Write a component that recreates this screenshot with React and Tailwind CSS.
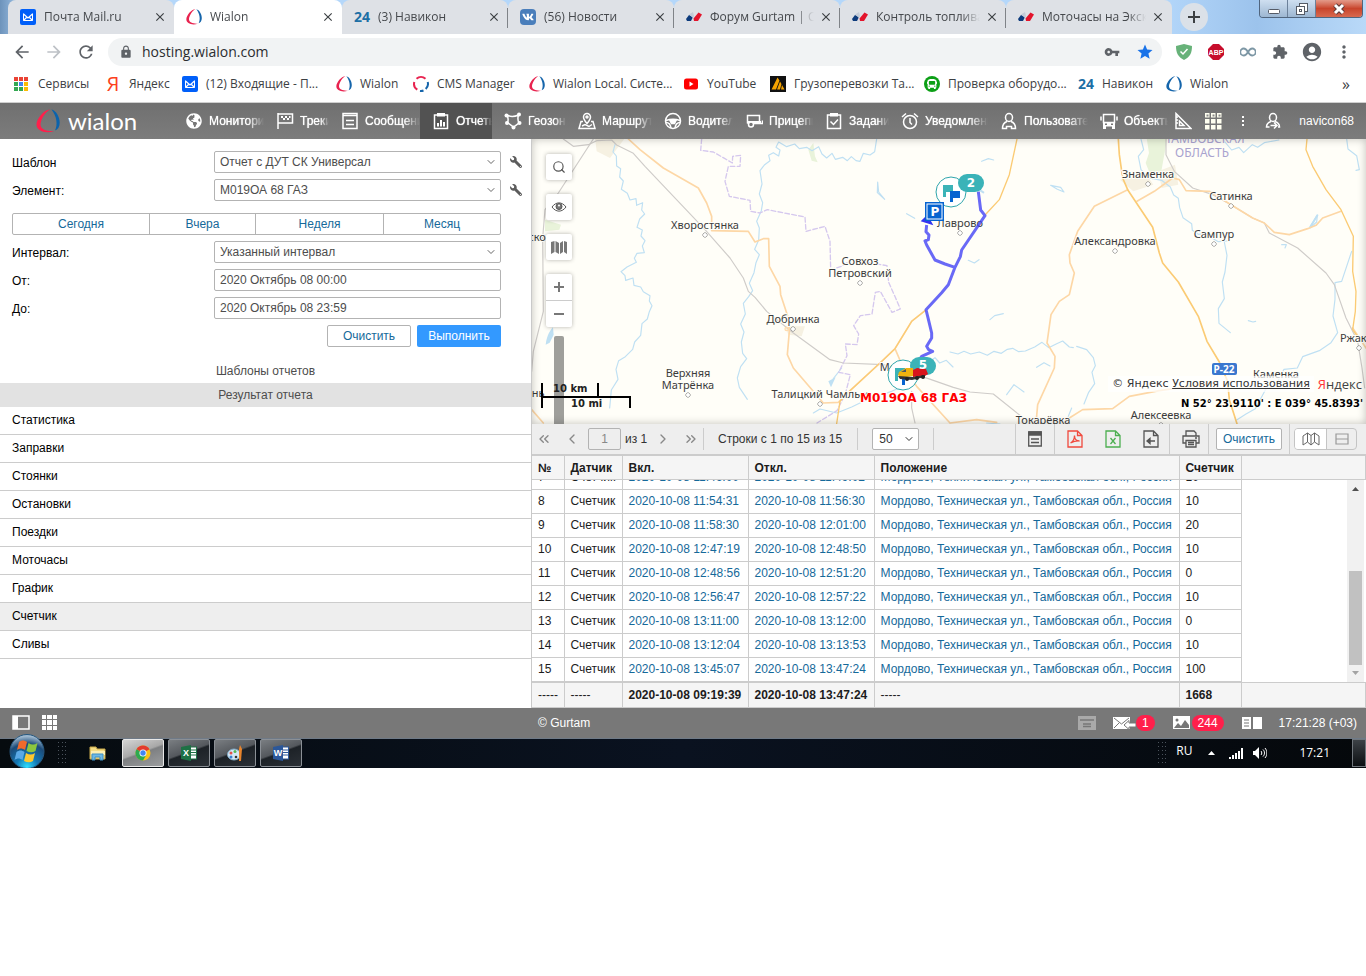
import React, { useState } from "react";
import {
  MdAccountCircle,
  MdArrowBack,
  MdArrowForward,
  MdClose,
  MdExtension,
  MdLock,
  MdMoreVert,
  MdRefresh,
  MdStar,
  MdVpnKey,
} from "react-icons/md";
import { FaBus, FaGlobeAmericas, FaVk, FaWrench } from "react-icons/fa";
import {
  ChevronDown,
  ChevronLeft,
  ChevronRight,
  ChevronsLeft,
  ChevronsRight,
  Search,
} from "lucide-react";

// ---------- small logos ----------

function Ring({ className, left = "#e8234f", right = "#1565ab" }) {
  return (
    <svg viewBox="0 0 24 24" className={className}>
      <path d="M14 .5C8 .5.5 10 .5 15.500c0 6.500 9 9.500 17.500 6.500-7 .5-13.500-1.500-13.500-6.500C4.500 11 9 3 14 .5z" fill={left} />
      <path d="M15.500.5c4.500 1 8.200 7.500 8.200 13 0 4-1.700 7-4.700 8 2.800-5.500 2-14-3.500-21z" fill={right} />
    </svg>
  );
}

function MailLogo() {
  return (
    <svg viewBox="0 0 16 16" className="w-4 h-4 shrink-0">
      <rect width="16" height="16" rx="2" fill="#005ff9" />
      <path d="M3.500 5l4.500 4 4.500-4M3.500 11.500l3-3M12.500 11.500l-3-3" fill="none" stroke="#fff" strokeWidth="1.300" />
      <path d="M3.500 4.500v7h9v-7" fill="none" stroke="#fff" />
    </svg>
  );
}

function GurtamLogo() {
  return (
    <svg viewBox="0 0 16 16" className="w-4 h-4 shrink-0">
      <path d="M0 10l3-4 4 2-2 4H1z" fill="#0d3b7c" />
      <path d="M3 5.500L7 3l1 4-1 2z" fill="#c3cbd8" />
      <path d="M7.500 9.500l5-6 3.500 2-4 6.500H8z" fill="#e3142c" />
    </svg>
  );
}

function Num24() {
  return (
    <span className="w-4 shrink-0 flex justify-center text-sm leading-4 font-bold text-[#1d6fa5]">
      24
    </span>
  );
}

function CmsLogo() {
  return (
    <svg viewBox="0 0 16 16" className="w-4 h-4 shrink-0" fill="none" strokeWidth="2">
      <path d="M3.500 2.700a7 7 0 0 1 9 0M1.300 6a7 7 0 0 0 3 7.700" stroke="#e8234f" />
      <path d="M14.700 6a7 7 0 0 1-2 7M10.500 14.500a7 7 0 0 1-3.500.4" stroke="#1565ab" />
    </svg>
  );
}

function AppsLogo() {
  const colors = ["#ea4335", "#ea4335", "#ea4335", "#34a853", "#4285f4", "#fbbc05", "#34a853", "#34a853", "#fbbc05"];
  return (
    <svg viewBox="0 0 14 14" className="w-[14px] h-[14px] mr-[2px] shrink-0">
      {colors.map((c, i) => (
        <rect key={i} x={(i % 3) * 5} y={Math.floor(i / 3) * 5} width="4" height="4" fill={c} />
      ))}
    </svg>
  );
}

// ---------- browser ----------

const TABS = [
  { icon: <MailLogo />, title: "Почта Mail.ru" },
  { icon: <Ring className="w-4 h-4 shrink-0" />, title: "Wialon", active: true },
  { icon: <Num24 />, title: "(3) Навикон" },
  {
    icon: (
      <span className="w-4 h-4 shrink-0 rounded-sm bg-[#4a7ebb] flex items-center justify-center text-white">
        <FaVk className="w-3 h-3" />
      </span>
    ),
    title: "(56) Новости",
  },
  { icon: <GurtamLogo />, title: "Форум Gurtam | Со" },
  { icon: <GurtamLogo />, title: "Контроль топлива" },
  { icon: <GurtamLogo />, title: "Моточасы на Экск" },
];

function TabStrip() {
  return (
    <div className="flex h-[34px] bg-[linear-gradient(90deg,#6d93bb_0,#b4d7fa_2%,#b4d7fa_85%,#9cc3ec_92%,#b9d9f8_100%)]">
      <div className="flex pl-2 min-w-0">
        {TABS.map((tab, i) => (
          <div
            key={i}
            className={`relative flex items-center pl-3 pr-[6px] rounded-t-lg ${
              tab.active ? "w-[168px] bg-white" : "w-[166px] bg-[#dee1e6]"
            }`}
          >
            {tab.icon}
            <span className="flex-1 min-w-0 ml-2 text-xs leading-4 text-[#45484c] whitespace-nowrap overflow-hidden [mask-image:linear-gradient(90deg,#000_82%,transparent)]">
              {tab.title}
            </span>
            <button type="button" aria-label="Закрыть" className="w-4 h-4 ml-1 flex items-center justify-center">
              <MdClose className="w-[14px] h-[14px] text-[#3c4043]" />
            </button>
            {i > 1 && i < 6 && (
              <span className="absolute right-0 top-2 w-px h-5 bg-[#7f8388]" />
            )}
          </div>
        ))}
      </div>
      <button
        type="button"
        className="w-7 h-7 ml-2 mt-[3px] rounded-full bg-[#dbe1e8] flex items-center justify-center shrink-0"
        aria-label="Новая вкладка"
      >
        <svg viewBox="0 0 12 12" className="w-3 h-3" stroke="#3c4043" strokeWidth="2">
          <path d="M6 0v12M0 6h12" />
        </svg>
      </button>
      <div className="flex ml-auto mr-[3px] h-[18px] rounded-b border border-t-0 border-[#50657e] overflow-hidden shrink-0">
        <button type="button" aria-label="Свернуть" className="w-7 flex items-center justify-center bg-linear-to-b from-[#cfdff0] to-[#9db7d2] border-r border-[#6c819a]">
          <svg viewBox="0 0 14 14" className="w-[14px] h-[14px]">
            <rect x="1.500" y="7.500" width="11" height="4" rx="1" fill="#fff" stroke="#555b66" />
          </svg>
        </button>
        <button type="button" aria-label="Развернуть" className="w-7 flex items-center justify-center bg-linear-to-b from-[#cfdff0] to-[#9db7d2] border-r border-[#6c819a]">
          <svg viewBox="0 0 14 14" className="w-[14px] h-[14px]" fill="#fff" stroke="#555b66">
            <rect x="4.500" y="1.500" width="8" height="8" />
            <rect x="1.500" y="4.500" width="8" height="8" />
            <rect x="4.500" y="7.500" width="2" height="2" />
          </svg>
        </button>
        <button type="button" aria-label="Закрыть окно" className="w-[46px] flex items-center justify-center bg-linear-to-b from-[#e39a8a] via-[#c8442c] to-[#d8694f]">
          <svg viewBox="0 0 14 12" className="w-[14px] h-3">
            <path d="M3 2l8 8M11 2l-8 8" stroke="#5b3a3a" strokeWidth="5" />
            <path d="M3 2l8 8M11 2l-8 8" stroke="#fff" strokeWidth="3" />
          </svg>
        </button>
      </div>
    </div>
  );
}

function AddressBar() {
  return (
    <div className="flex items-center h-9 pl-3 pr-[14px] text-[#5f6368]">
      <MdArrowBack className="w-5 h-5 shrink-0" />
      <MdArrowForward className="w-5 h-5 ml-3 shrink-0 text-[#bdc1c6]" />
      <MdRefresh className="w-5 h-5 ml-3 shrink-0" />
      <div className="flex flex-1 items-center h-7 ml-3 pl-[11px] pr-2 rounded-full bg-[#f1f3f4]">
        <MdLock className="w-[14px] h-[14px]" />
        <input
          aria-label="Адрес"
          className="flex-1 ml-2 pl-px text-sm outline-none text-[#2b2d30] bg-transparent"
          defaultValue="hosting.wialon.com"
        />
        <MdVpnKey className="w-4 h-4" />
        <MdStar className="w-[18px] h-[18px] ml-4 text-[#1a73e8]" />
      </div>
      <div className="flex items-center gap-4 ml-[14px] shrink-0">
        <svg viewBox="0 0 16 16" className="w-4 h-4">
          <path d="M0 2l8-2 8 2c0 7-2 11-8 14C2 13 0 9 0 2z" fill="#67b279" />
          <path d="M4.500 7.500l2.500 2.500 4.500-5" fill="none" stroke="#fff" strokeWidth="1.500" />
        </svg>
        <svg viewBox="0 0 16 16" className="w-4 h-4">
          <path d="M5 0h6l5 5v6l-5 5H5l-5-5V5z" fill="#c70d2c" />
          <text x="8" y="11" textAnchor="middle" fontSize="7" fontWeight="700" fill="#fff" fontFamily="Liberation Sans, sans-serif">
            ABP
          </text>
        </svg>
        <svg viewBox="0 0 16 16" className="w-4 h-4" fill="none" stroke="#7d97a5" strokeWidth="1.800">
          <path d="M8 8C6.500 5.500 5 4.500 3.800 4.500a3.500 3.500 0 0 0 0 7C5 11.500 6.500 10.500 8 8s3-3.500 4.200-3.500a3.500 3.500 0 0 1 0 7C11 11.500 9.500 10.500 8 8z" />
        </svg>
        <MdExtension className="w-4 h-4" />
        <MdAccountCircle className="w-[22px] h-[22px] -mx-[3px]" />
        <MdMoreVert className="w-5 h-5 -mx-[2px]" />
      </div>
    </div>
  );
}

const BOOKMARKS = [
  { w: "w-[91px]", icon: <AppsLogo />, label: "Сервисы" },
  { w: "w-[77px]", icon: <span className="w-4 shrink-0 text-center text-xl leading-5 text-[#fc3f1d]">Я</span>, label: "Яндекс" },
  { w: "w-[154px]", icon: <MailLogo />, label: "(12) Входящие - П..." },
  { w: "w-[77px]", icon: <Ring className="w-4 h-4 shrink-0" />, label: "Wialon" },
  { w: "w-[116px]", icon: <CmsLogo />, label: "CMS Manager" },
  { w: "w-[154px]", icon: <Ring className="w-4 h-4 shrink-0" />, label: "Wialon Local. Систе..." },
  {
    w: "w-[87px]",
    icon: (
      <svg viewBox="0 0 16 16" className="w-4 h-4 shrink-0">
        <rect x="1" y="2.500" width="14" height="11" rx="2.500" fill="#f00" />
        <path d="M6.500 5.500v5l4-2.500z" fill="#fff" />
      </svg>
    ),
    label: "YouTube",
  },
  {
    w: "w-[154px]",
    icon: (
      <svg viewBox="0 0 16 16" className="w-4 h-4 shrink-0">
        <rect width="16" height="16" fill="#111" />
        <path d="M1.500 13.500l6-12 2 3-3.500 9zM7 13.500l3-8 1.500 2.500-1.500 5.500zM11 13.500l1-4.500 2.500 4.500z" fill="#f5a300" />
      </svg>
    ),
    label: "Грузоперевозки Та...",
  },
  {
    w: "w-[154px]",
    icon: (
      <span className="w-4 h-4 shrink-0 rounded-full bg-[#0c9f16] flex items-center justify-center text-white">
        <FaBus className="w-[10px] h-[10px]" />
      </span>
    ),
    label: "Проверка оборудо...",
  },
  { w: "w-[88px]", icon: <Num24 />, label: "Навикон" },
  { w: "w-[77px]", icon: <Ring className="w-4 h-4 shrink-0" left="#1565ab" />, label: "Wialon" },
];

function Bookmarks() {
  return (
    <div className="flex items-center h-[33px] pl-[14px] pr-4 pb-1 border-b border-[#cfcfcf]">
      {BOOKMARKS.map((b, i) => (
        <a key={i} href="#" className={`${b.w} shrink-0 flex items-center text-xs leading-4 text-[#3c4043] whitespace-nowrap`}>
          {b.icon}
          <span className="ml-2">{b.label}</span>
        </a>
      ))}
      <span className="ml-auto text-base leading-4 text-[#3c4043]">»</span>
    </div>
  );
}

// ---------- wialon header ----------

function NavSvg({ children }) {
  return (
    <svg viewBox="0 0 18 18" className="w-[18px] h-[18px] shrink-0" fill="none" stroke="currentColor" strokeWidth="1.500">
      {children}
    </svg>
  );
}

const NAV = [
  { w: "w-[91px]", label: "Мониторинг", icon: <FaGlobeAmericas className="w-4 h-4 mx-px shrink-0" /> },
  {
    w: "w-[65px]",
    label: "Треки",
    icon: (
      <NavSvg>
        <path d="M2 1v16M2 2h14.500v9H2" />
        <path d="M5 4h2v2H5zM9 4h2v2H9zM13 4h1.500v2H13zM7 6h2v2H7zM11 6h2v2h-2z" fill="currentColor" stroke="none" />
      </NavSvg>
    ),
  },
  {
    w: "w-[91px]",
    label: "Сообщения",
    icon: (
      <NavSvg>
        <path d="M2 1.500h14v15H2zM2 3.500h14M5 8.500h8M5 12.500h8" />
      </NavSvg>
    ),
  },
  {
    w: "w-[72px]",
    label: "Отчеты",
    icon: (
      <NavSvg>
        <path d="M2.500 3h13v13.500h-13z" />
        <path d="M5 1h8v3.500H5zM5 11h2v3.500H5zM8 8h2v6.500H8zM11 10h2v4.500h-2z" fill="currentColor" stroke="none" />
      </NavSvg>
    ),
  },
  {
    w: "w-[74px]",
    label: "Геозоны",
    icon: (
      <NavSvg>
        <path d="M4 3.500c3 1.500 7 1 10.500-.5-1 3-1 5 .5 8l-5.500 4-6-4.500C4.500 8 4.500 6 3 3.500z" />
        <g fill="currentColor" stroke="none">
          <circle cx="2.500" cy="3.500" r="2" />
          <circle cx="15" cy="2.500" r="2" />
          <circle cx="15.500" cy="11" r="2" />
          <circle cx="9.500" cy="15.500" r="2" />
          <circle cx="3" cy="11" r="2" />
        </g>
      </NavSvg>
    ),
  },
  {
    w: "w-[86px]",
    label: "Маршруты",
    icon: (
      <NavSvg>
        <path d="M5 9.500H3L1 16.500h16l-2-7h-2M4 14l3-1.500 4 2 3-2" />
        <path d="M9 11.500C6.500 8.500 5.500 7 5.500 5a3.500 3.500 0 0 1 7 0c0 2-1 3.500-3.500 6.500z" />
        <circle cx="9" cy="5" r="1" />
      </NavSvg>
    ),
  },
  {
    w: "w-[81px]",
    label: "Водители",
    icon: (
      <NavSvg>
        <circle cx="9" cy="9" r="7.500" />
        <path d="M2 8.500c4-1.500 10-1.500 14 0M2 10.500c3 0 4.500 2 5 5.500M16 10.500c-3 0-4.500 2-5 5.500" />
        <path d="M6 8.500h6l-1.500 3h-3z" fill="currentColor" />
      </NavSvg>
    ),
  },
  {
    w: "w-[80px]",
    label: "Прицепы",
    icon: (
      <NavSvg>
        <path d="M2.500 11.500v-8h12v8H8.500M14.500 11.500h3v-3" />
        <path d="M2 9h12v2.500H2zM14 9h2v3h-2z" fill="currentColor" stroke="none" />
        <circle cx="6" cy="12.500" r="2.500" fill="#767676" />
      </NavSvg>
    ),
  },
  {
    w: "w-[76px]",
    label: "Задания",
    icon: (
      <NavSvg>
        <path d="M2.500 3h13v13.500h-13zM5.500 9.500l3 3 4.500-5" />
        <path d="M5 1h8v3.500H5z" fill="currentColor" stroke="none" />
      </NavSvg>
    ),
  },
  {
    w: "w-[99px]",
    label: "Уведомления",
    icon: (
      <NavSvg>
        <circle cx="9" cy="10" r="6.500" />
        <path d="M9 6v4.500l2 2M1 5l4-3.500M17 5l-4-3.500" />
      </NavSvg>
    ),
  },
  {
    w: "w-[100px]",
    label: "Пользователи",
    icon: (
      <NavSvg>
        <ellipse cx="9" cy="5.500" rx="3.500" ry="4" />
        <path d="M7 9.500c-3 1-4.500 2.500-4.500 7h4v-2h5v2h4c0-4.500-1.500-6-4.500-7" />
      </NavSvg>
    ),
  },
  {
    w: "w-[80px]",
    label: "Объекты",
    icon: (
      <NavSvg>
        <path d="M3.500 2.500h11v8h-11zM1 4.500v4M17 4.500v4" />
        <path d="M3 10h12v4.500H3zM3 14h3v3H3zM12 14h3v3h-3z" fill="currentColor" stroke="none" />
        <path d="M5 12.300h2M11 12.300h2" stroke="#777" />
      </NavSvg>
    ),
  },
];

function Header() {
  const [active, setActive] = useState(3);
  return (
    <header className="flex h-9 text-white text-xs leading-4 bg-linear-to-b from-[#707070] to-[#7c7c7c]">
      <a href="#" className="flex items-center w-[173px] pl-9 shrink-0">
        <Ring className="w-6 h-6" left="#ff1f4b" right="#0b63ad" />
        <span className="ml-2 font-['Lato'] text-2xl leading-8">wialon</span>
      </a>
      <nav className="flex">
        {NAV.map((item, i) => (
          <button
            key={item.label}
            type="button"
            onClick={() => setActive(i)}
            className={`${item.w} flex items-center pl-3 shrink-0 ${i === active ? "bg-[#525252]" : ""}`}
          >
            {item.icon}
            <span className="flex-1 min-w-0 ml-[6px] text-left whitespace-nowrap overflow-hidden [text-shadow:0_0_1px_#fff] [mask-image:linear-gradient(90deg,#000_70%,transparent)]">
              {item.label}
            </span>
          </button>
        ))}
      </nav>
      <div className="flex flex-1 items-center pr-3 [&>div]:w-[30px] [&>div]:flex [&>div]:justify-center">
        <div>
          <NavSvg>
            <path d="M2 1.500v15h15zM5.500 9v4.500H10z" />
            <path d="M2 5h2M2 8h2M2 11h2" />
          </NavSvg>
        </div>
        <div>
          <svg viewBox="0 0 17 17" className="w-[17px] h-[17px]">
            {[0, 1, 2, 3, 4, 5, 6, 7, 8].map((i) => (
              <rect key={i} x={(i % 3) * 6} y={Math.floor(i / 3) * 6} width="4.500" height="4.500" fill="#fffff0" />
            ))}
            <path d="M1.500 1.500h2v2h-2zM7.500 1.500h2v2h-2zM13.500 1.500h2v2h-2z" fill="#8a8a8a" />
          </svg>
        </div>
        <div>
          <svg viewBox="0 0 3 11" className="w-[3px] h-[11px]" fill="#fff">
            <path d="M0 0h2v2H0zM0 4h2v2H0zM0 8h2v2H0z" />
          </svg>
        </div>
        <div>
          <NavSvg>
            <ellipse cx="9" cy="5.500" rx="3.500" ry="4" />
            <path d="M7 9.500c-3 1-4.500 2.500-4.500 5.500h3M11 9.500c3 1 4.500 2.500 4.500 5.500h-1.500M6.500 13.500h6M10 10.500l3 3-3 3" />
          </NavSvg>
        </div>
        <span className="ml-auto">navicon68</span>
      </div>
    </header>
  );
}

// ---------- left panel ----------

function Picker({ id, value }) {
  return (
    <div className="relative flex-1">
      <select
        id={id}
        className="block appearance-none w-full h-[22px] pl-[5px] pr-5 rounded-xs border border-[#b3b3b3] bg-white text-[#4d4d4d]"
      >
        <option>{value}</option>
      </select>
      <ChevronDown className="absolute right-1 top-[5px] w-3 h-3 text-[#666] pointer-events-none" />
    </div>
  );
}

function Field({ label, id, tool, children }) {
  return (
    <div className="flex items-center h-[22px]">
      <label htmlFor={id} className="w-[202px] pt-[2px] shrink-0 text-black">
        {label}
      </label>
      {children}
      <div className="w-[30px] shrink-0 flex pl-[9px]">
        {tool && (
          <button type="button" aria-label="Настроить">
            <FaWrench className="w-3 h-3 -scale-x-100 text-[#5c5c5c]" />
          </button>
        )}
      </div>
    </div>
  );
}

const SECTIONS = ["Статистика", "Заправки", "Стоянки", "Остановки", "Поездки", "Моточасы", "График", "Счетчик", "Сливы"];
const inputClass = "flex-1 min-w-0 h-[22px] pl-[5px] rounded-xs border border-[#b3b3b3] text-[#4d4d4d]";

function ReportPanel() {
  const [section, setSection] = useState("Счетчик");
  return (
    <aside className="w-[532px] shrink-0 border-r border-[#c9c9c9] text-xs leading-4">
      <form className="flex flex-col gap-[6px] pt-3 pl-3" onSubmit={(e) => e.preventDefault()}>
        <Field label="Шаблон" id="template" tool>
          <Picker id="template" value="Отчет с ДУТ СК Универсал" />
        </Field>
        <Field label="Элемент:" id="unit" tool>
          <Picker id="unit" value="М019ОА 68 ГАЗ" />
        </Field>
        <div className="flex h-[22px] mt-[6px] mr-[30px] rounded-xs border border-[#b3b3b3] text-[#15699a] [&>button+button]:border-l [&>button]:border-[#b3b3b3]">
          <button type="button" className="w-[136px]">Сегодня</button>
          <button type="button" className="w-[106px]">Вчера</button>
          <button type="button" className="w-[128px]">Неделя</button>
          <button type="button" className="flex-1">Месяц</button>
        </div>
        <Field label="Интервал:" id="interval">
          <Picker id="interval" value="Указанный интервал" />
        </Field>
        <Field label="От:" id="from">
          <input id="from" className={inputClass} defaultValue="2020 Октябрь 08 00:00" />
        </Field>
        <Field label="До:" id="to">
          <input id="to" className={inputClass} defaultValue="2020 Октябрь 08 23:59" />
        </Field>
        <div className="flex justify-end gap-[6px] mr-[30px]">
          <button type="button" className="w-[84px] h-[22px] rounded-xs border border-[#b3b3b3] text-[#15699a]">
            Очистить
          </button>
          <button type="submit" className="w-[84px] h-[22px] rounded-xs bg-[#3399ff] text-white">
            Выполнить
          </button>
        </div>
      </form>
      <div className="mt-3 h-6 leading-6 text-center text-[#4d4d4d]">Шаблоны отчетов</div>
      <div className="h-6 leading-6 text-center text-[#4d4d4d] bg-[#e2e2e2]">Результат отчета</div>
      <ul>
        {SECTIONS.map((name) => (
          <li key={name} className="border-b border-[#cccccc]">
            <button
              type="button"
              onClick={() => setSection(name)}
              className={`block w-full h-[27px] pb-[2px] pl-3 text-left text-black ${name === section ? "bg-[#eeeeee]" : ""}`}
            >
              {name}
            </button>
          </li>
        ))}
      </ul>
    </aside>
  );
}

// ---------- map ----------

const PLACES = [
  { x: 705, y: 229, lines: ["Хворостянка"] },
  { x: 860, y: 265, lines: ["Совхоз", "Петровский"] },
  { x: 793, y: 323, lines: ["Добринка"] },
  { x: 688, y: 377, lines: ["Верхняя", "Матрёнка"] },
  { x: 820, y: 398, lines: ["Талицкий Чамлык"] },
  { x: 1148, y: 178, lines: ["Знаменка"] },
  { x: 1231, y: 200, lines: ["Сатинка"] },
  { x: 1214, y: 238, lines: ["Сампур"] },
  { x: 1115, y: 245, lines: ["Александровка"] },
  { x: 1359, y: 342, lines: ["Ржакса"] },
  { x: 1276, y: 378, lines: ["Каменка"], bare: true },
  { x: 1161, y: 419, lines: ["Алексеевка"] },
  { x: 1043, y: 424, lines: ["Токарёвка"], bare: true },
  { x: 960, y: 227, lines: ["Лаврово"] },
  { x: 888, y: 371, lines: ["Мо"], bare: true },
  { x: 537, y: 241, lines: ["ско"], bare: true },
  { x: 538, y: 397, lines: ["нь"], bare: true },
];

function MapCanvas() {
  return (
    <svg viewBox="532 139 834 285" preserveAspectRatio="xMinYMin slice" className="absolute inset-0 w-full h-full">
      <rect x="532" y="139" width="3000" height="900" fill="#fffef8" />
      <g transform="translate(530 138) scale(.33333)" fill="none" strokeLinejoin="round" strokeLinecap="round">
        <g fill="#f6f1e2">
          <path d="M195 0h90l-45 60-40-20z" />
          <path d="M765 565h60l-10 30-40-5z" />
          <path d="M1770 125l80-15 20 30-60 20z" />
          <path d="M1885 100l50-20 10 60-50 10z" />
        </g>
        <g fill="#e9f3da">
          <path d="M1850 0h62l-20 110-25 15-20-50 10-30z" />
          <path d="M45 245l48 15-5 15-43 5zM835 35l15-20 5 40 8 18-18-5z" />
        </g>
        {/* rivers and ponds */}
        <g stroke="#bfe0f3" strokeWidth="3.500">
          <path d="M255 20l-6 22 10 12 1 30 12 8-3 25 11 12-6 25 18 12 8 20 18-4 2 20 18-8-3 22 9 12-15 15-8 25 16 8-4 18 12 14-8 16 6 20-22 2-8 15 6 12-28 14-18 14 12 12 2 14 22-7 3 22 20 5 8 14 20 12-2 16 8 14-8 18-6 22-16 14-4 35-18 20-6 22-22 22-20 12-8 26 6 30-20 32-5 54" />
          <path d="M1040 3l-6 38-14 10-20-5-10 24-12-2-14-12-12 12-14-10-22 6-10-18-16 14-14-12-10-22-20 12-16-10-22 4-14-14-24 8-24-14-8 16 12 8-4 18-16-10-14 8 4 16-16 12-14 18 6 40-8 30 10 26-4 24-14 32 8 20-2 36-12 28 14 16-10 24-6 30-14 32 10 22-12 18-16 20 6 32-14 30 10 24-8 30 4 34 12 16-18 24-10 34 6 28 24 36" />
          <path d="M1043 132l3 30 18 22-22-20zM1130 227l24 14M910 722l25-32M850 825l20-12 50 12 45-18 45-22 75-25 45-20 35-22 30-45 20-14 14 16 20-8 20 20" />
          <path d="M1355 70l20-8 16 4M1562 142l30 6 10 14-20-8zM1315 367l18 8 14-10M1380 545l14-12 26-6M1520 688l22-14 18 10M1430 770l22-30 30 22" />
          <path d="M1260 642l24 6 18-8 20 8 26-6 24 10 20-12 22 6 18-12 16-3 18 10 20-2 28-12 22-14 20 16 24-12 18-8 20 18 12 2" />
          <path d="M1640 625l30 10 20 24 6 24-10 20 8 34-18 26-14 35M1625 810l-10 25M1370 855l40 3" />
          <path d="M1833 3l8 32-16 20 8 40 22 24 40 8 26 20 10 24 14 10 4 28 10 30 26 18 2 20 18 12 20-2 26 16 14 8 26-2" />
          <path d="M2083 312l8 40-6 50-8 30 6 50-18 30 2 44 34 28" />
          <path d="M2085 12l20 24 22-8 14 16 26-24 16 8 20-14 44-8M2450 3l4 30 26 20 8 42-10 2M2465 340l-30 90-20 4 0 50-6 50 14 50-20 30-35 24-50 18-16 34-40 4-26 50-28 8-32 60-28 16-28 18M2340 270l20-18 2-20-22 34M2255 320l14 0-4 10M2155 548l14 4 8-2" />
        </g>
        <path d="M47 620c4-30 15-45 22-52l2 22-12 24zM895 730l22-12-14 30z" fill="#bfe0f3" />
        <path d="M1332 145l28 18M2342 266l20-34" stroke="#bfe0f3" strokeWidth="6" />
        {/* region border */}
        <path
          d="M515 3l-3 34 38 5 35 20 22 13 1-20 24-3-2 33h-35l-10 45 13 45 62 12 2 33 28 5 22-10 113 22 3 43 57-15 15 45 2 85 33-10 30-20 106 18 5 50 20 45 15 35-25 10-35-63-15 3-10 65-35 5-20 30 15 25-5 32-35-2 5 35-25 50 35 7-15 58-25 50-60 37"
          stroke="#d5c8ee" strokeWidth="4" strokeDasharray="14 7"
        />
        {/* railways */}
        <g stroke="#cfccc9" strokeWidth="3.500">
          <path d="M100 3l30 22 45-5 25-12 45-2 15 15 50 25 35 39 180 190 75 85 40 60 15 40 20 18 35 42 80 65 110 80 40 10 120 5 135 42 75 26 50 14 70 6 80 64 40 30" />
          <path d="M190 3L85 165l-40 50-7 85 2 220-30 120-5 60M1145 760v50l10 45" />
          <path d="M1908 3v47l25 50 55 50 60 20 55 30 65 40 35 15 15 30 85 45 85 75 25 35 35 100 35 70 13 80 8 60" />
        </g>
        {/* roads */}
        <g stroke="#fdd7a6" strokeWidth="5">
          <path d="M295 3l35 32 70 55 105 60 25 45 15 40v43l110 2 20 32 25-10h16l2 83 32 60 2 25 23 70 3 40-6 70 18 40 90 105 45-2 35-35 90-83 45-43 50-82 40-32M1095 632l25 58 40 55 100 110M1260 855l80-10 60 8" />
          <path d="M1793 155l-100 50-50 75-25 70 2 25 13 30-15 65-30 20-25 40-12 85 24 40-2 35-50 110-5 57" />
          <path d="M1821 190l52-30 55-40 20 5 20 33 70 2 65 40 65 40 35 15 30 28 45 7 55-18 25-10 20-22 55-20M1618 840l40-25 90-3 50-37 90-17 160-23M5 815l35 40M2468 570l40 60" />
        </g>
        <g stroke="#fbcb74" strokeWidth="5">
          <path d="M1461 3l-23 107-30 75-40 43M920 857l10-67 30-32 90-83 45-43 50-82 40-32" strokeWidth="4" />
          <path d="M1765 3l3 47 10 70 15 35 75 113 20 77 10 30 47 57 60 103 26 75 37 62 25 58 5 55 23 72" />
          <path d="M2331 3l-3 32 20 50 40 70 45 60 37 80-2 105 10 60-2 60-8 55 25 35" strokeWidth="4" />
        </g>
        <circle cx="770" cy="573" r="5" stroke="#ffdcae" strokeWidth="4" />
      </g>
      <g fontFamily="Noto Sans, sans-serif" fontSize="11" textAnchor="middle">
        <g fill="#a9a3cf" fontSize="12">
          <text x="1205" y="143">ТАМБОВСКАЯ</text>
          <text x="1202" y="157">ОБЛАСТЬ</text>
        </g>
        {PLACES.map((p) => (
          <g key={p.lines[0]} fill="#3c3c3c" stroke="#fffef8" strokeWidth="2" paintOrder="stroke">
            {p.lines.map((line, i) => (
              <text key={line} x={p.x} y={p.y + i * 12}>
                {line}
              </text>
            ))}
            {!p.bare && (
              <circle cx={p.x} cy={p.y + p.lines.length * 12 - 6} r="2" fill="#fff" stroke="#555" strokeWidth="1" />
            )}
          </g>
        ))}
      </g>
      <rect x="1212" y="363" width="25" height="12" rx="2" fill="#3a77cf" />
      <text x="1224" y="373" textAnchor="middle" fontFamily="Noto Sans, sans-serif" fontSize="10" fontWeight="700" fill="#fff">
        Р-22
      </text>
      {/* vehicle track */}
      <g transform="translate(530 138) scale(.33333)" fill="none" stroke="#3f3ff5" strokeOpacity=".78" strokeWidth="9" strokeLinejoin="round">
        <path d="M1190 261l-2 20 9 10-2 14-10 4 5 12 25 45 30 12 30 10M1345 161l7 55 13 17-70 103-4 20-16 32-20 52-20 24-47 51 5 20 12 50v15l-15 25 6 10 12 5-33 15-12 18" />
        <path d="M1172 250l20-20 18 32z" fill="#3434f0" stroke="none" />
      </g>
      {/* markers */}
      <g>
        <circle cx="951" cy="192" r="15" fill="#fff" stroke="#2fa5ab" />
        <path d="M943 185h10v7h-7v5h-3z" fill="#3bb3b8" />
        <path d="M950 191h10v7h-7v4h-3z" fill="#0663d0" />
        <rect x="958" y="174" width="26" height="18" rx="9" fill="#3bb3b8" />
        <rect x="925" y="202" width="19" height="19" fill="#0663d0" />
        <rect x="927" y="204" width="15" height="15" fill="none" stroke="#fff" />
        <circle cx="903" cy="375" r="15" fill="#fff" stroke="#2fa5ab" />
        <path d="M895 368h10v7h-7v6h-3z" fill="#3bb3b8" />
        <path d="M902 376h3v9h-3z" fill="#0663d0" />
        <rect x="910" y="357" width="26" height="18" rx="9" fill="#3bb3b8" />
        <path d="M899 372l7-4h7v8l-12 2-3-3z" fill="#f0b310" />
        <path d="M901 372l5-3v3z" fill="#4c5a63" />
        <path d="M913 370l4-2 9 1 2 5-3 2-12 1z" fill="#d8141c" />
        <path d="M898 376l15 1 12-2v2l-13 3-12-1z" fill="#333" />
        <circle cx="907" cy="379" r="2" fill="#222" />
        <circle cx="917" cy="378" r="2" fill="#222" />
        <circle cx="923" cy="377" r="2" fill="#222" />
        <g fontFamily="DejaVu Sans, sans-serif" fontSize="12" fontWeight="700" fill="#fff" textAnchor="middle">
          <text x="971" y="187">2</text>
          <text x="935" y="216">P</text>
          <text x="923" y="369">5</text>
        </g>
      </g>
      <text x="860" y="402" fontFamily="DejaVu Sans, sans-serif" fontSize="12" fontWeight="700" fill="#f00" stroke="#fff" strokeWidth="2" paintOrder="stroke">
        М019ОА 68 ГАЗ
      </text>
    </svg>
  );
}

const mapButton = "w-[26px] h-[26px] flex items-center justify-center rounded-xs bg-white text-[#777] shadow-[0_0_4px_rgba(0,0,0,0.3)]";

function MapView() {
  return (
    <section className="relative h-[285px] overflow-hidden">
      <MapCanvas />
      <div className="absolute left-[14px] top-[15px] flex flex-col gap-[14px] items-center">
        <button type="button" aria-label="Поиск" className={mapButton}>
          <Search className="w-[14px] h-[14px] text-[#555]" strokeWidth={2} />
        </button>
        <button type="button" aria-label="Видимость" className={mapButton}>
          <svg viewBox="0 0 16 12" className="w-4 h-3" fill="none" stroke="#555">
            <path d="M1 6c4-5.500 10-5.500 14 0-4 5.500-10 5.500-14 0z" />
            <circle cx="8" cy="5.500" r="3" fill="#777" />
            <circle cx="8" cy="4.500" r="1" fill="#fff" stroke="none" />
          </svg>
        </button>
        <button type="button" aria-label="Слои" className={mapButton}>
          <svg viewBox="0 0 16 13" className="w-4 h-[13px]" fill="currentColor">
            <path d="M0 1l3.500-1v11L0 13zM4.500 0L8 2v11l-3.500-2zM9 2l3-2v11l-3 2zM13 0l3 1v12l-3-2z" />
          </svg>
        </button>
        <div className="w-[26px] rounded-xs bg-white shadow-[0_0_4px_rgba(0,0,0,0.3)] text-[#777]">
          <button type="button" aria-label="Приблизить" className="w-full h-[27px] flex items-center justify-center border-b border-[#ccc]">
            <svg viewBox="0 0 10 10" className="w-[10px] h-[10px]" stroke="currentColor" strokeWidth="2">
              <path d="M5 0v10M0 5h10" />
            </svg>
          </button>
          <button type="button" aria-label="Отдалить" className="w-full h-[26px] flex items-center justify-center">
            <svg viewBox="0 0 10 10" className="w-[10px] h-[10px]" stroke="currentColor" strokeWidth="2">
              <path d="M0 5h10" />
            </svg>
          </button>
        </div>
      </div>
      <div className="absolute left-[22px] bottom-0 w-[10px] h-[88px] rounded-t-xs bg-[#9f9f9b]" />
      <div className="absolute left-[9px] bottom-4 w-[90px] h-[25px] border-l-2 border-black font-['DejaVu_Sans'] font-bold text-[10px] leading-3 text-[#222]">
        <div className="w-[56px] h-[13px] pl-[10px] border-r-2 border-black">10 km</div>
        <div className="h-3 pl-7 border-t-2 border-r-2 border-black">10 mi</div>
      </div>
      <div className="absolute right-1 bottom-8 flex items-center whitespace-nowrap font-['DejaVu_Sans'] text-[11px] leading-4 text-[#333]">
        <span className="bg-white/70 px-1">
          © Яндекс <a href="#" className="underline">Условия использования</a>
        </span>
        <span className="ml-1 font-['Open_Sans'] text-[13px] text-[#444]">
          <span className="text-[#f33]">Я</span>ндекс
        </span>
      </div>
      <div className="absolute right-[3px] bottom-[14px] whitespace-nowrap font-['DejaVu_Sans'] font-bold text-[10px] leading-3 text-black">
        N 52° 23.9110' : E 039° 45.8393'
      </div>
      <div className="absolute inset-0 pointer-events-none shadow-[inset_0_0_8px_rgba(0,0,0,0.25)]" />
    </section>
  );
}

// ---------- report table ----------

function DocIcon({ color, children }) {
  return (
    <svg viewBox="0 0 16 18" className="w-4 h-[18px]" fill="none" stroke={color} strokeWidth="1.300">
      <path d="M1 1h9.500L15 5.500V17H1zM10.500 1v4.500H15" />
      {children}
    </svg>
  );
}

function TableToolbar() {
  return (
    <div className="flex items-center h-8 text-xs leading-4 text-[#333] bg-[#eeeeee] border-b-2 border-[#cccccc]">
      <div className="flex items-center w-[172px] h-[22px] pl-1 border-r border-[#ccc] text-[#888]">
        <button type="button" aria-label="В начало"><ChevronsLeft className="w-4 h-4" strokeWidth={2} /></button>
        <button type="button" aria-label="Назад" className="ml-3"><ChevronLeft className="w-4 h-4" strokeWidth={2} /></button>
        <input aria-label="Страница" className="w-[33px] h-[22px] ml-2 text-center rounded-xs border border-[#b3b3b3]" defaultValue="1" />
        <span className="ml-1 text-[#333]">из 1</span>
        <button type="button" aria-label="Вперед" className="ml-2"><ChevronRight className="w-4 h-4" strokeWidth={2} /></button>
        <button type="button" aria-label="В конец" className="ml-3"><ChevronsRight className="w-4 h-4" strokeWidth={2} /></button>
      </div>
      <span className="pl-[14px] pr-[15px]">Строки с 1 по 15 из 15</span>
      <div className="flex items-center h-[22px] px-[14px] border-x border-[#ccc]">
        <div className="relative">
          <select aria-label="Строк на странице" className="block appearance-none w-[47px] h-[22px] pl-[6px] rounded-xs border border-[#b3b3b3] bg-white">
            <option>50</option>
          </select>
          <ChevronDown className="absolute right-1 top-[5px] w-3 h-3 pointer-events-none" />
        </div>
      </div>
      <div className="flex items-center self-stretch ml-auto text-[#555] [&>div]:flex [&>div]:items-center [&>div]:self-stretch [&>div]:border-l [&>div]:border-[#ccc]">
        <div className="px-3">
          <svg viewBox="0 0 14 16" className="w-[14px] h-4" fill="none" stroke="#555" strokeWidth="1.300">
            <path d="M.7 1h12.600v14H.7zM3 8h8M3 11.500h8" />
            <path d="M1 1h12v3H1z" fill="#555" />
          </svg>
        </div>
        <div className="pl-3 pr-[10px] gap-[22px]">
          <DocIcon color="#f04a3e">
            <path d="M3.500 13c3-1.500 4-5 4-7.500 0 3.500 2 5.500 5 5.500-4-.5-7 1-9 2z" />
          </DocIcon>
          <DocIcon color="#4caf50">
            <path d="M5.500 8l5 6M10.500 8l-5 6" />
          </DocIcon>
          <DocIcon color="#555">
            <path d="M5 11h7M7 8.500v5L4 11z" fill="#555" />
          </DocIcon>
        </div>
        <div className="pl-3 pr-2">
          <svg viewBox="0 0 18 18" className="w-[18px] h-[18px]" fill="none" stroke="#555" strokeWidth="1.300">
            <path d="M4 6V1h8l2 2v3M4 13H1V6h16v7h-3M4 10.500h10V17H4zM6 12.500h6M6 14.500h6M13 8h2" />
          </svg>
        </div>
        <div className="px-[7px]">
          <button type="button" className="w-[66px] h-[22px] rounded-xs border border-[#b3b3b3] bg-white text-[#15699a]">
            Очистить
          </button>
        </div>
        <div className="pl-1 pr-[9px]">
          <div className="flex h-[22px] rounded border border-[#c4c4c4] overflow-hidden">
            <button type="button" aria-label="Карта" className="w-[31px] flex items-center justify-center bg-white">
              <svg viewBox="0 0 18 14" className="w-[18px] h-[14px]" fill="none" stroke="#666">
                <path d="M1 4l4.500-3v9L1 13zM5.500 1L9 3.500 12.500 1v9L9 13l-3.500-3M9 3.500V13M12.500 1L17 4v9l-4.500-3" />
              </svg>
            </button>
            <button type="button" aria-label="Раздельно" className="w-[30px] flex items-center justify-center border-l border-[#c4c4c4]">
              <svg viewBox="0 0 14 12" className="w-[14px] h-3" fill="none" stroke="#999" strokeWidth="1.200">
                <path d="M1 1h12v10H1zM1 6h12" />
              </svg>
            </button>
          </div>
        </div>
      </div>
    </div>
  );
}

const ADDRESS = "Мордово, Техническая ул., Тамбовская обл., Россия";
const ROWS = [
  [7, "11:46:00", "11:49:02", 10],
  [8, "11:54:31", "11:56:30", 10],
  [9, "11:58:30", "12:01:00", 20],
  [10, "12:47:19", "12:48:50", 10],
  [11, "12:48:56", "12:51:20", 0],
  [12, "12:56:47", "12:57:22", 10],
  [13, "13:11:00", "13:12:00", 0],
  [14, "13:12:04", "13:13:53", 10],
  [15, "13:45:07", "13:47:24", 100],
];

const tableClass =
  "w-full table-fixed text-left [&_td]:border-r [&_td]:border-[#ccc] [&_td]:px-[6px] [&_td]:py-0 [&_th]:border-r [&_th]:border-[#ccc] [&_th]:px-[6px] [&_th]:pt-px [&_th]:pb-0 whitespace-nowrap";

function Cols() {
  return (
    <colgroup>
      <col className="w-8" />
      <col className="w-[58px]" />
      <col className="w-[126px]" />
      <col className="w-[126px]" />
      <col className="w-[305px]" />
      <col className="w-[62px]" />
      <col />
    </colgroup>
  );
}

function ReportTable() {
  return (
    <section className="text-xs leading-4 text-[#1c1c1c]">
      <table className={`${tableClass} bg-[#f5f5f5] border-b border-[#ccc]`}>
        <Cols />
        <thead>
          <tr className="h-[23px]">
            <th>№</th>
            <th>Датчик</th>
            <th>Вкл.</th>
            <th>Откл.</th>
            <th>Положение</th>
            <th>Счетчик</th>
            <th></th>
          </tr>
        </thead>
      </table>
      <div className="flex h-[202px] overflow-hidden">
        <div className="flex-1 min-w-0 flex flex-col justify-end">
          <table className={`${tableClass} [&_a]:text-[#15699a]`}>
            <Cols />
            <tbody>
              {ROWS.map(([n, on, off, count]) => (
                <tr key={n} className="h-6 [&>td:not(:last-child)]:border-b [&>td:last-child]:border-r-0">
                  <td>{n}</td>
                  <td>Счетчик</td>
                  <td><a href="#">2020-10-08 {on}</a></td>
                  <td><a href="#">2020-10-08 {off}</a></td>
                  <td><a href="#">{ADDRESS}</a></td>
                  <td>{count}</td>
                  <td></td>
                </tr>
              ))}
            </tbody>
          </table>
        </div>
        <div className="flex flex-col items-center justify-between w-[17px] mr-[2px] py-[7px] bg-[#f1f1f1]">
          <svg viewBox="0 0 7 4" className="w-[7px] h-1"><path d="M0 4l3.500-4L7 4z" fill="#505050" /></svg>
          <div className="w-[13px] h-[94px] mt-auto mb-[6px] bg-[#c1c1c1]" />
          <svg viewBox="0 0 7 4" className="w-[7px] h-1"><path d="M0 0l3.500 4L7 0z" fill="#a3a3a3" /></svg>
        </div>
      </div>
      <table className={`${tableClass} bg-[#f5f5f5] border-y border-[#ccc] font-bold`}>
        <Cols />
        <tbody>
          <tr className="h-[25px]">
            <td className="font-normal">-----</td>
            <td className="font-normal">-----</td>
            <td>2020-10-08 09:19:39</td>
            <td>2020-10-08 13:47:24</td>
            <td className="font-normal">-----</td>
            <td>1668</td>
            <td></td>
          </tr>
        </tbody>
      </table>
    </section>
  );
}

// ---------- bottom bars ----------

function StatusBar() {
  return (
    <footer className="flex items-center h-[30px] text-xs leading-4 text-white bg-[#787878]">
      <div className="flex w-[538px] pl-3 gap-3 shrink-0">
        <svg viewBox="0 0 18 15" className="w-[18px] h-[15px]">
          <path d="M1 1h16v13H1z" fill="none" stroke="#fff" strokeWidth="1.500" />
          <path d="M1 1h5v13H1z" fill="#fff" />
        </svg>
        <svg viewBox="0 0 15 15" className="w-[15px] h-[15px]" fill="#fff">
          <path d="M0 0h4v4H0zM5 0h5v4H5zM11 0h4v4h-4zM0 5h4v5H0zM5 5h5v5H5zM11 5h4v5h-4zM0 11h4v4H0zM5 11h5v4H5zM11 11h4v4h-4z" />
        </svg>
      </div>
      <span>© Gurtam</span>
      <div className="flex items-center ml-auto pr-[9px]">
        <svg viewBox="0 0 18 14" className="w-[18px] h-[14px]">
          <path d="M0 0h18v14H0z" fill="#a9a9a9" />
          <path d="M2 4h14M5 8h8M5 10.500h8" stroke="#777" strokeWidth="1.500" />
        </svg>
        <svg viewBox="0 0 23 14" className="w-[23px] h-[14px] ml-[17px]">
          <path d="M0 1h17v12H0z" fill="#fff" />
          <path d="M1 2l7.500 6L16 2M1 12l5-5" fill="none" stroke="#777" />
          <path d="M11 9l5-4.500V7h7v4h-7v2.500z" fill="#fff" stroke="#777" />
        </svg>
        <span className="h-4 px-[6px] rounded-full bg-[#ff1f4b]">1</span>
        <svg viewBox="0 0 17 13" className="w-[17px] h-[13px] ml-[18px]">
          <path d="M0 0h17v13H0z" fill="#fff" />
          <path d="M1 12l4-5 3 3 4-6 4 5v3z" fill="#777" />
          <circle cx="4" cy="4" r="1.500" fill="#777" />
        </svg>
        <span className="h-4 ml-[2px] px-[6px] rounded-full bg-[#ff1f4b]">244</span>
        <svg viewBox="0 0 20 12" className="w-5 h-3 ml-[18px]">
          <path d="M0 0h9v12H0zM11 0h9v12h-9z" fill="#fff" />
          <path d="M2 3h5M2 6h5M2 9h5" stroke="#777" />
        </svg>
        <span className="ml-[17px]">17:21:28 (+03)</span>
      </div>
    </footer>
  );
}

function Grip() {
  return (
    <svg viewBox="0 0 8 24" className="w-2 h-6 shrink-0" stroke="#4b535c" strokeDasharray="1 3">
      <path d="M.5 1v22M4.500 1v22M7.500 1v22" />
    </svg>
  );
}

function OfficeIcon({ color, letter }) {
  return (
    <svg viewBox="0 0 16 16" className="w-4 h-4">
      <rect x="7" y="2" width="8.500" height="12" fill="#fff" stroke={color} />
      <path d="M10 5h5M10 7.500h5M10 10h5" stroke={color} />
      <path d="M0 2l10-2v16L0 14z" fill={color} />
      <text x="5" y="11" textAnchor="middle" fontSize="9" fontWeight="700" fill="#fff" fontFamily="Liberation Sans, sans-serif">
        {letter}
      </text>
    </svg>
  );
}

const taskButton =
  "w-[42px] h-7 flex items-center justify-center rounded-xs border border-[#8b9096] bg-[linear-gradient(160deg,#7a7e82_0%,#54585d_45%,#1d2227_50%,#2b3036_100%)]";

function Taskbar() {
  return (
    <div className="flex items-center h-[30px] border-t border-[#6f7a87] bg-linear-to-r from-[#060b0f] via-[#0a1220] to-[#05080b] text-white text-xs leading-4">
      <button type="button" aria-label="Пуск" className="w-[38px] ml-2 -mt-1 shrink-0 relative z-10">
        <svg viewBox="0 0 38 36" className="w-[38px] h-9">
          <defs>
            <radialGradient id="orb" cx=".5" cy=".95" r=".9">
              <stop offset="0" stopColor="#2fe0ff" />
              <stop offset=".35" stopColor="#1378b4" />
              <stop offset=".75" stopColor="#1b4a78" />
              <stop offset="1" stopColor="#9fb9cf" />
            </radialGradient>
          </defs>
          <circle cx="19" cy="18.500" r="17" fill="url(#orb)" stroke="#27587f" />
          <path d="M11 9c3-2 5-2 8 0l-2 8c-3-2-5-2-8 0z" fill="#ef6a2c" />
          <path d="M20.500 10c3 2 6 2 9 0l-2 8c-3 2-6 1.500-9 0z" fill="#8cc63f" />
          <path d="M8.500 19c3-2 5-2 8 0l-2 8c-3-2-5-2-8 0z" fill="#5aa9e6" />
          <path d="M18 20c3 2 6 2 9 0l-2 8c-3 2-6 1.500-9 0z" fill="#fdc82f" />
        </svg>
      </button>
      <div className="ml-3">
        <Grip />
      </div>
      <button type="button" aria-label="Проводник" className="w-[42px] ml-[10px] mr-1 flex justify-center">
        <svg viewBox="0 0 17 16" className="w-[17px] h-4">
          <path d="M1 2h6l1 2h8v10H1z" fill="#f4dc84" stroke="#c9a94a" />
          <path d="M2 6h14v4H2z" fill="#fbefb5" />
          <path d="M3 15V9h11v6h-3v-3H6v3z" fill="#6db7e4" stroke="#3d8fc4" />
        </svg>
      </button>
      <div className="flex gap-1">
        <button type="button" aria-label="Chrome" className="w-[42px] h-7 flex items-center justify-center rounded-xs border border-[#e8e8e8] bg-[linear-gradient(160deg,#d5d5d5_0%,#a8a8a8_45%,#7e8082_50%,#9b9d9f_100%)]">
          <svg viewBox="0 0 16 16" className="w-4 h-4">
            <circle cx="8" cy="8" r="7.500" fill="#fbc116" />
            <path d="M8 8L1.500 4.250A7.500 7.500 0 0 1 14.500 4.250z" fill="#e33b2e" />
            <path d="M8 8L1.500 4.250A7.500 7.500 0 0 0 8 15.500l3.200-5.600z" fill="#2da94f" />
            <circle cx="8" cy="8" r="3.500" fill="#fff" />
            <circle cx="8" cy="8" r="2.700" fill="#4285f4" />
          </svg>
        </button>
        <button type="button" aria-label="Excel" className={taskButton}>
          <OfficeIcon color="#1e7145" letter="X" />
        </button>
        <button type="button" aria-label="Paint" className={taskButton}>
          <svg viewBox="0 0 16 16" className="w-4 h-4">
            <ellipse cx="7" cy="9.500" rx="6.500" ry="5.500" fill="#d4e8f5" stroke="#7fa9c4" />
            <circle cx="4" cy="8" r="1.500" fill="#e2504a" />
            <circle cx="8" cy="6.500" r="1.500" fill="#57b957" />
            <circle cx="4" cy="12" r="1.500" fill="#3b7fd0" />
            <circle cx="9" cy="12" r="1.300" fill="#333" />
            <path d="M13 0l2 4-1 12h-2L12 4z" fill="#e8842c" />
          </svg>
        </button>
        <button type="button" aria-label="Word" className={taskButton}>
          <OfficeIcon color="#2b579a" letter="W" />
        </button>
      </div>
      <div className="flex items-center ml-auto self-stretch">
        <Grip />
        <span className="ml-[10px] -mt-1">RU</span>
        <svg viewBox="0 0 7 4" className="w-[7px] h-1 ml-4"><path d="M0 4l3.500-4L7 4z" fill="#fff" /></svg>
        <svg viewBox="0 0 14 11" className="w-[14px] h-[11px] ml-[14px]" fill="#fff">
          <path d="M0 9h2v2H0zM3 7h2v4H3zM6 5h2v6H6zM9 3h2v8H9zM12 0h2v11h-2z" />
        </svg>
        <svg viewBox="0 0 14 14" className="w-[14px] h-[14px] ml-[10px]" fill="none" stroke="#fff">
          <path d="M0 5h2l4-4v12L2 9H0z" fill="#fff" stroke="none" />
          <path d="M8 5c1 1 1 3 0 4M10 3.500c2 2 2 5 0 7M12 2c2.500 3 2.500 7 0 10" />
        </svg>
        <span className="ml-8">17:21</span>
        <div className="w-[14px] h-7 ml-[22px] border border-[#70767c] bg-linear-to-b from-[#3d4247] to-[#0d1013]" />
      </div>
    </div>
  );
}

export default function App() {
  return (
    <div className="bg-white overflow-x-hidden">
      <div className="font-['Open_Sans',sans-serif]">
        <TabStrip />
        <AddressBar />
        <Bookmarks />
      </div>
      <div className="font-['Liberation_Sans',sans-serif]">
        <Header />
        <main className="flex">
          <ReportPanel />
          <div className="flex-1 min-w-0">
            <MapView />
            <TableToolbar />
            <ReportTable />
          </div>
        </main>
        <StatusBar />
      </div>
      <div className="font-['Open_Sans',sans-serif]">
        <Taskbar />
      </div>
    </div>
  );
}
